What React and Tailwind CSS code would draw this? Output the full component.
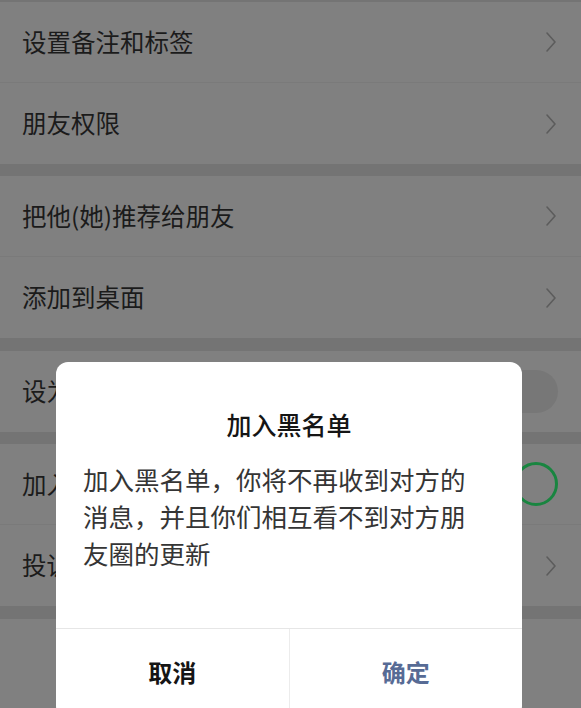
import { useState } from "react";

const FONT = { fontFamily: '"Noto Sans CJK SC", "Noto Sans", sans-serif' };

function Chevron() {
  return (
    <svg width="12" height="22" viewBox="0 0 12 22" fill="none" className="shrink-0">
      <path d="M2 2l8 9-8 9" stroke="#5c5c5c" strokeWidth="1.6" strokeLinecap="round" strokeLinejoin="round" />
    </svg>
  );
}

function Row({ label, right, divider }) {
  return (
    <div className={`h-[81px] flex items-center justify-between pl-[22px] pr-[24px] bg-[#808080] ${divider ? "border-b border-[#7a7a7a]" : ""}`}>
      <span className="text-[24.5px] text-[#1b1b1b] leading-none">{label}</span>
      {right}
    </div>
  );
}

function Gap({ h }) {
  return <div className={`${h} bg-[#747474]`} />;
}

export default function App() {
  const [blocked] = useState(true);

  return (
    <div className="relative w-[581px] h-[708px] overflow-hidden bg-[#808080]" style={FONT}>
      <Gap h="h-[2px]" />
      <Row label="设置备注和标签" right={<Chevron />} divider />
      <Row label="朋友权限" right={<Chevron />} />
      <Gap h="h-[12px]" />
      <Row label="把他(她)推荐给朋友" right={<Chevron />} divider />
      <Row label="添加到桌面" right={<Chevron />} />
      <Gap h="h-[13px]" />
      <Row
        label="设为星标朋友"
        right={<div className="w-[76px] h-[43px] rounded-full bg-[#777777] -mr-[1px]" />}
      />
      <Gap h="h-[12px]" />
      <Row
        label="加入黑名单"
        divider
        right={
          blocked && (
            <div className="w-[44px] h-[44px] rounded-full border-[3px] border-[#198540] bg-[#808080] -mr-[1px]" />
          )
        }
      />
      <Row label="投诉" right={<Chevron />} />
      <Gap h="h-[13px]" />
      <div className="h-[100px] bg-[#808080]" />

      {/* dialog */}
      <div className="absolute left-[56px] top-[362px] w-[466px] bg-white rounded-[12px] overflow-hidden">
        <div className="pt-[46px] text-center text-[25px] leading-[32px] font-medium text-[#151515]">
          加入黑名单
        </div>
        <p className="mt-[20px] pl-[27px] max-w-[420px] text-[25.5px] leading-[37px] text-[#353535]">
          加入黑名单，你将不再收到对方的消息，并且你们相互看不到对方朋友圈的更新
        </p>
        <div className="mt-[57px] border-t border-[#e6e6e6] flex h-[90px]">
          <div className="flex-1 flex justify-center pt-[27px] text-[24px] leading-[32px] font-bold text-[#151515]">
            取消
          </div>
          <div className="w-px bg-[#ececec]" />
          <div className="flex-1 flex justify-center pt-[27px] text-[24px] leading-[32px] font-bold text-[#576b95]">
            确定
          </div>
        </div>
      </div>
    </div>
  );
}
